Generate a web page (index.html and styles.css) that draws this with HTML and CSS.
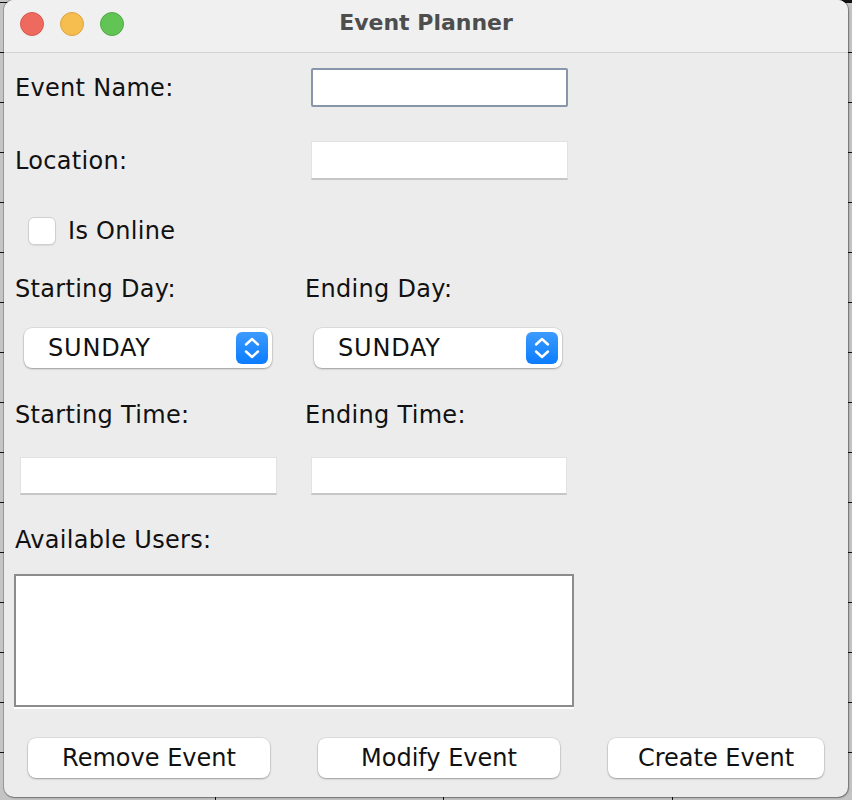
FILE: index.html
```html
<!DOCTYPE html>
<html>
<head>
<meta charset="utf-8">
<title>Event Planner</title>
<link rel="stylesheet" href="styles.css">
</head>
<body>
<div class="window">
  <div class="titlebar">
    <div class="lights">
      <span class="light red"></span>
      <span class="light yellow"></span>
      <span class="light green"></span>
    </div>
    <div class="title">Event Planner</div>
  </div>
  <div class="content">
    <div class="row row-name">
      <label class="label">Event Name:</label>
      <div class="field field-focus field-c1"></div>
    </div>
    <div class="row row-loc">
      <label class="label">Location:</label>
      <div class="field field-c1"></div>
    </div>
    <div class="check-row">
      <span class="checkbox"></span>
      <span class="label">Is Online</span>
    </div>
    <div class="row row-label row-daylabel">
      <span class="label">Starting Day:</span>
      <span class="label">Ending Day:</span>
    </div>
    <div class="row row-combo">
      <div class="combo"><span class="combo-text">SUNDAY</span><span class="combo-btn"><svg width="32" height="32" viewBox="0 0 32 32"><path d="M10 12.5 L16 7 L22 12.5 M10 19.5 L16 25 L22 19.5" fill="none" stroke="#fff" stroke-width="2.4" stroke-linecap="round" stroke-linejoin="round"/></svg></span></div>
      <div class="combo"><span class="combo-text">SUNDAY</span><span class="combo-btn"><svg width="32" height="32" viewBox="0 0 32 32"><path d="M10 12.5 L16 7 L22 12.5 M10 19.5 L16 25 L22 19.5" fill="none" stroke="#fff" stroke-width="2.4" stroke-linecap="round" stroke-linejoin="round"/></svg></span></div>
    </div>
    <div class="row row-label row-timelabel">
      <span class="label">Starting Time:</span>
      <span class="label">Ending Time:</span>
    </div>
    <div class="row row-time">
      <div class="field field-t0"></div>
      <div class="field field-t1"></div>
    </div>
    <div class="row-label row-users">
      <span class="label">Available Users:</span>
    </div>
    <div class="list"></div>
    <div class="buttons">
      <button class="btn">Remove Event</button>
      <button class="btn">Modify Event</button>
      <button class="btn btn-narrow">Create Event</button>
    </div>
  </div>
</div>
</body>
</html>
```

FILE: styles.css
```css
html, body {
  margin: 0;
  padding: 0;
}
body {
  width: 852px;
  height: 800px;
  overflow: hidden;
  background:
    linear-gradient(#111, #111) 215px 797px / 1px 3px no-repeat,
    linear-gradient(#111, #111) 443px 797px / 1px 3px no-repeat,
    linear-gradient(#111, #111) 672px 797px / 1px 3px no-repeat,
    linear-gradient(#111, #111) 838px 0 / 14px 2px no-repeat,
    repeating-linear-gradient(180deg, transparent 0 2px, #111 2px 3px, transparent 3px 50px),
    #c4c4c4;
  font-family: "DejaVu Sans", "Liberation Sans", sans-serif;
  color: #111;
}
.window {
  margin-left: 4px;
  width: 844px;
  height: 797px;
  background: #ececec;
  border-radius: 10px;
  box-shadow: 0 0 0 1px rgba(0, 0, 0, 0.22), 1px 1px 2px rgba(0, 0, 0, 0.25);
  overflow: hidden;
}
.titlebar {
  height: 52px;
  background: #f0f0f0;
  border-bottom: 1px solid #d2d2d2;
  display: flex;
  align-items: center;
  position: relative;
}
.lights {
  display: flex;
  gap: 16px;
  padding-left: 16px;
  margin-top: -5px;
}
.light {
  width: 24px;
  height: 24px;
  border-radius: 50%;
  box-sizing: border-box;
}
.red { background: #ee6a5e; border: 1px solid #d5594e; }
.yellow { background: #f6be4f; border: 1px solid #dca440; }
.green { background: #61c454; border: 1px solid #50a945; }
.title {
  position: absolute;
  left: 0;
  right: 0;
  top: 9px;
  text-align: center;
  font-weight: bold;
  font-size: 22px;
  line-height: 28px;
  color: #4d4d4d;
}
.content {
  padding-left: 11px;
  display: flex;
  flex-direction: column;
}
.label {
  font-size: 24px;
  line-height: 28px;
  letter-spacing: 0.3px;
  white-space: nowrap;
}
.row {
  display: grid;
  grid-template-columns: 290px 1fr;
  align-items: center;
}
.field {
  background: #fff;
  box-sizing: border-box;
  border: 1px solid #e2e2e2;
  border-bottom: 2px solid #c6c6c6;
}
.field-focus {
  border: 2px solid #8796ab;
  border-radius: 2px;
}
.row-name { margin-top: 15px; height: 39px; }
.row-loc { margin-top: 34px; height: 39px; }
.field-c1 { margin-left: 6px; width: 257px; height: 39px; }
.check-row {
  margin-top: 37px;
  height: 28px;
  display: flex;
  align-items: center;
}
.checkbox {
  width: 28px;
  height: 28px;
  margin-left: 13px;
  margin-right: 12px;
  box-sizing: border-box;
  background: #fff;
  border: 1px solid #cfcfcf;
  border-radius: 6px;
  box-shadow: 0 1px 1px rgba(0, 0, 0, 0.08);
}
.row-daylabel { margin-top: 30px; height: 28px; }
.row-combo { margin-top: 25px; height: 40px; }
.combo {
  margin-left: 9px;
  width: 248px;
  height: 40px;
  background: #fff;
  border-radius: 8px;
  box-shadow: 0 0 0 0.5px rgba(0, 0, 0, 0.12), 0 1px 2px rgba(0, 0, 0, 0.3);
  display: flex;
  align-items: center;
  justify-content: space-between;
}
.combo-text {
  font-size: 24px;
  margin-left: 24px;
  letter-spacing: 0.8px;
}
.combo-btn {
  width: 32px;
  height: 32px;
  margin-right: 4px;
  border-radius: 6px;
  background: linear-gradient(#3c9bfd, #0b7cff);
  display: flex;
}
.row-timelabel { margin-top: 33px; height: 28px; }
.row-time { margin-top: 28px; height: 38px; }
.field-t0 { margin-left: 5px; width: 257px; height: 38px; }
.field-t1 { margin-left: 6px; width: 256px; height: 38px; }
.row-users { margin-top: 31px; height: 28px; }
.list {
  margin-top: 20px;
  margin-left: -1px;
  width: 560px;
  height: 133px;
  box-sizing: border-box;
  background: #fff;
  border: 2px solid #8c8c8c;
  box-shadow: 0 2px 0 #fff;
}
.buttons {
  margin-top: 31px;
  display: grid;
  grid-template-columns: 290px 290px 1fr;
}
.btn {
  margin-left: 13px;
  width: 242px;
  height: 40px;
  padding: 0;
  border: none;
  background: #fff;
  border-radius: 8px;
  box-shadow: 0 0 0 0.5px rgba(0, 0, 0, 0.12), 0 1px 2px rgba(0, 0, 0, 0.3);
  font-family: "DejaVu Sans", "Liberation Sans", sans-serif;
  font-size: 24px;
  color: #111;
}
.btn-narrow { width: 216px; }
```
